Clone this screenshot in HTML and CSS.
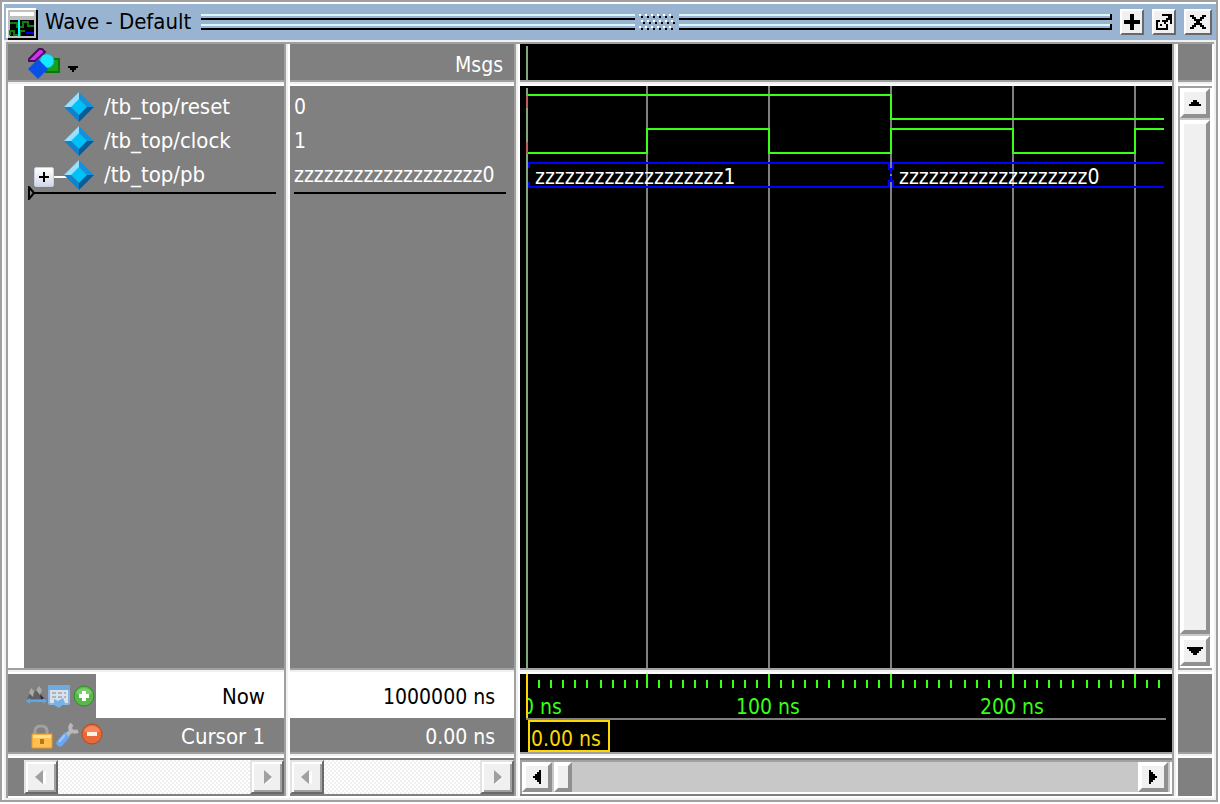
FILE: index.html
```
<!DOCTYPE html>
<html lang="en">
<head>
<meta charset="utf-8">
<title>Wave - Default</title>
<link rel="stylesheet" href="styles.css">
</head>
<body>
<div class="window">
  <header class="titlebar">
    <svg class="app-icon" width="32" height="32" shape-rendering="crispEdges" aria-hidden="true">
      <path fill="#000" d="M2 2h30v30H2z"/><path fill="#fff" d="M0 0h30v30H0z"/><path fill="#c0c0c0" d="M2 2h28v28H2z"/>
      <path fill="#fff" d="M4 4h24v4H4z"/><path fill="#000" d="M4 12h24v16H4z"/>
      <path fill="none" stroke="#147a14" stroke-width="2" d="M4 15h7v4h6v-5h5v4h6M4 27v-4h4v4h6v-4h5"/>
      <path fill="#0ff" d="M12 12h2v16h-2z"/><path fill="#00f" d="M20 24h8v2h-8z"/>
    </svg>
    <h1 class="title">Wave - Default</h1>
    <div class="grip"><i></i><i></i></div>
    <svg class="dots" width="36" height="16" shape-rendering="crispEdges" aria-hidden="true">
      <path stroke="#fff" stroke-width="2" stroke-dasharray="2 4" d="M0 1h34M2 7h34M0 13h34"/>
      <path stroke="#000" stroke-width="2" stroke-dasharray="2 4" d="M2 3h34M4 9h32M2 15h34"/>
    </svg>
    <div class="grip capped"><i></i><i></i></div>
    <div class="window-buttons">
      <button class="tool" aria-label="Zoom"><svg width="16" height="16" shape-rendering="crispEdges"><path d="M6 0h4v6h6v4h-6v6H6v-6H0V6h6z"/></svg></button>
      <button class="tool" aria-label="Undock"><svg width="16" height="16" shape-rendering="crispEdges"><path d="M0 6h4v2H2v6h8v-4h2v6H0zM6 0h10v10h-2V6h-2v2h-2v2H8V8H6V6h4V4h2V2H6zM4 10h2v2H4z"/></svg></button>
      <button class="tool wide" aria-label="Close"><svg width="16" height="14" shape-rendering="crispEdges"><path d="M0 0h4v2h2v2h4V2h2V0h4v2h-2v2h-2v2h-2v2h2v2h2v2h2v2h-4v-2h-2v-2H6v2H4v2H0v-2h2v-2h2V8h2V6H4V4H2V2H0z"/></svg></button>
    </div>
  </header>

  <main class="panes">
    <section class="pane names">
      <div class="pane-head">
        <button class="filter" aria-label="Object filter">
          <svg width="52" height="32" aria-hidden="true">
            <path fill="#18a018" stroke="#087808" stroke-width="2" d="M18 11h13v13H18z"/>
            <path fill="#d030f0" stroke="#481058" stroke-width="2" d="M1 13v-2L11 1h3l3 3-10 9z"/>
            <circle cx="19" cy="13" r="7" fill="#18e8ff" stroke="#3098b0" stroke-dasharray="2 1"/>
            <path fill="#0850e8" d="M10 11l10 10-10 10L0 21z"/>
            <path shape-rendering="crispEdges" d="M40 18h10v2h-2v2h-2v2h-2v-2h-2v-2h-2z"/>
          </svg>
        </button>
      </div>
      <div class="sash"></div>
      <div class="pane-body tree">
        <div class="gutter"></div>
        <ul class="signals">
          <li><svg class="gem" width="30" height="30"><use href="#gem"/></svg>/tb_top/reset</li>
          <li><svg class="gem" width="30" height="30"><use href="#gem"/></svg>/tb_top/clock</li>
          <li class="group"><button class="expand" aria-label="Expand"><svg width="12" height="12" shape-rendering="crispEdges"><path d="M5 1h2v4h4v2H7v4H5V7H1V5h4z"/></svg></button><svg class="gem" width="30" height="30"><use href="#gem"/></svg>/tb_top/pb</li>
          <li class="insert"><svg width="8" height="14"><path fill="#808080" stroke="#000" stroke-width="2" d="M1 1v12l5-6z"/></svg></li>
        </ul>
      </div>
      <div class="sash"></div>
      <div class="foot">
        <div class="foot-now">
          <div class="foot-icons">
            <svg width="70" height="24" aria-hidden="true">
              <path fill="#606060" d="M1 14l4-8 3 2 3-5 7 10v1z"/><path fill="#aaa" d="M3 8l2-5 3 3-1 6zM10 5l3-4 3 4-2 5z"/><path fill="#302048" d="M14 10l5 4h-4z"/>
              <path fill="#58a8f0" d="M0 16l4-3v2h13v-2l4 3-4 3v-2H4v2z"/>
              <rect x="23" y="1" width="20" height="18" rx="1" fill="#d8e0e8" stroke="#8cb4dc" stroke-width="2"/><path fill="#70a8e0" d="M22 0h22v5H22z"/>
              <path stroke="#a8b4c0" stroke-width="2" stroke-dasharray="4 2" d="M26 8h14M26 12h14"/><path fill="#78b0e8" d="M28 14l4 2 5-3 2 5-6 5-5-3z"/>
              <circle cx="58" cy="11" r="10" fill="#58b848" stroke="#308c30"/><path fill="#a0dc90" opacity=".5" d="M50 8a9 9 0 0116 0q-8 5-16 0"/><path fill="#fff" d="M56 6h4v3h3v4h-3v3h-4v-3h-3V9h3z"/>
            </svg>
          </div>
          <span>Now</span>
        </div>
        <div class="foot-cursor">
          <svg width="76" height="26" aria-hidden="true">
            <path fill="none" stroke="#a0a0a0" stroke-width="3" d="M5 13V8q0-5 6-5t6 5v5"/><path fill="#ffc050" stroke="#e89828" d="M2 11h20v14H2z"/><path fill="#ffe090" d="M3 12h18v3H3z"/><path fill="#b87818" d="M10 16h4v5h-4z"/>
            <path stroke="#68a8f0" stroke-width="7" stroke-linecap="round" d="M30 20l6-7"/><path stroke="#98c8ff" stroke-width="2" d="M29 19l6-7"/><path fill="none" stroke="#b8b8b8" stroke-width="4" d="M37 12l4-4M42 1q-3 3-1 6t7 1"/>
            <circle cx="62" cy="11" r="10" fill="#e86838" stroke="#b84820"/><path fill="#ffa880" opacity=".5" d="M54 8a9 9 0 0116 0q-8 5-16 0"/><path fill="#fff0e0" d="M57 9h10v4H57z"/>
          </svg>
          <span>Cursor 1</span>
        </div>
      </div>
      <div class="sash"></div>
      <div class="scroll-row indent">
        <button class="arrow flat" aria-label="Left" disabled><svg width="12" height="16"><use href="#left-off"/></svg></button>
        <div class="trough"></div>
        <button class="arrow flat" aria-label="Right" disabled><svg width="12" height="16"><use href="#right-off"/></svg></button>
      </div>
    </section>
    <div class="vsash"></div>

    <section class="pane values">
      <div class="pane-head msgs">Msgs</div>
      <div class="sash"></div>
      <div class="pane-body">
        <ul class="signals vals"><li>0</li><li>1</li><li>zzzzzzzzzzzzzzzzzzz0</li><li class="insert"></li></ul>
      </div>
      <div class="sash"></div>
      <div class="foot">
        <div class="foot-now"><span>1000000 ns</span></div>
        <div class="foot-cursor"><span>0.00 ns</span></div>
      </div>
      <div class="sash"></div>
      <div class="scroll-row">
        <button class="arrow flat" aria-label="Left" disabled><svg width="12" height="16"><use href="#left-off"/></svg></button>
        <div class="trough"></div>
        <button class="arrow flat" aria-label="Right" disabled><svg width="12" height="16"><use href="#right-off"/></svg></button>
      </div>
    </section>
    <div class="vsash"></div>

    <section class="pane waves">
      <div class="pane-head black"><svg class="plot" shape-rendering="crispEdges"><path class="zero" d="M7 2v40"/></svg></div>
      <div class="sash"></div>
      <div class="pane-body black">
        <svg class="plot" shape-rendering="crispEdges">
          <path class="grid" d="M127 0v2000M249 0v2000M371 0v2000M493 0v2000M615 0v2000"/>
          <path class="zero" d="M7 2v2000"/>
          <path class="unknown" d="M7 10v12M7 56v12"/>
          <path class="signal" d="M8 9h363v24h273"/>
          <path class="signal" d="M8 67h119v-24h122v24h122v-24h122v24h122v-24h29"/>
          <path class="bus" d="M9 82v-5h360v6h2v5M9 96v5h360v-6h2v-5M644 77h-271v6h-2v5M644 101h-271v-6h-2v-5"/>
          <text x="15" y="98">zzzzzzzzzzzzzzzzzzz1</text>
          <text x="379" y="98">zzzzzzzzzzzzzzzzzzz0</text>
        </svg>
      </div>
      <div class="sash"></div>
      <div class="foot black">
        <svg class="plot" shape-rendering="crispEdges">
          <path class="signal" d="M19 6v8m12-8v8m12-8v8m12-8v8m12-8v8m14-8v8m12-8v8m12-8v8m12-8v8M127 0v14M139 6v8m12-8v8m12-8v8m12-8v8m12-8v8m14-8v8m12-8v8m12-8v8m12-8v8M249 0v14M261 6v8m12-8v8m12-8v8m12-8v8m12-8v8m14-8v8m12-8v8m12-8v8m12-8v8M371 0v14M383 6v8m12-8v8m12-8v8m12-8v8m12-8v8m14-8v8m12-8v8m12-8v8m12-8v8M493 0v14M505 6v8m12-8v8m12-8v8m12-8v8m12-8v8m14-8v8m12-8v8m12-8v8m12-8v8M615 0v14M627 6v8m12-8v8"/>
          <svg x="6" width="640" height="44"><text class="tick" x="-4" y="40">0 ns</text></svg>
          <text class="tick mid" x="248" y="40">100 ns</text>
          <text class="tick mid" x="492" y="40">200 ns</text>
          <path class="grid" d="M6 45h640"/>
          <path class="cursor" d="M7 0v44M9 47h80v30H9z"/>
          <text class="cursor-time" x="11" y="72">0.00 ns</text>
        </svg>
      </div>
      <div class="sash"></div>
      <div class="scroll-row live">
        <button class="arrow raised" aria-label="Scroll left"><svg width="8" height="14" shape-rendering="crispEdges"><path d="M8 0v14H6v-2H4v-2H2V8H0V6h2V4h2V2h2V0z"/></svg></button>
        <div class="thumb"></div>
        <div class="fill"></div>
        <button class="arrow raised" aria-label="Scroll right"><svg width="8" height="14" shape-rendering="crispEdges"><path d="M0 0v14h2v-2h2v-2h2V8h2V6H6V4H4V2H2V0z"/></svg></button>
      </div>
    </section>
    <div class="vsash"></div>

    <section class="pane side">
      <div class="pane-head"></div>
      <div class="sash"></div>
      <div class="pane-body vscroll">
        <button class="arrow raised" aria-label="Scroll up"><svg width="12" height="6" shape-rendering="crispEdges"><path d="M4 0h4v2h2v2h2v2H0V4h2V2h2z"/></svg></button>
        <div class="thumb tall"></div>
        <button class="arrow raised" aria-label="Scroll down"><svg width="16" height="8" shape-rendering="crispEdges"><path d="M0 0h16v2h-2v2h-2v2h-2v2H6V6H4V4H2V2H0z"/></svg></button>
      </div>
      <div class="sash"></div>
      <div class="foot"></div>
      <div class="sash"></div>
      <div class="corner"></div>
    </section>
  </main>
</div>

<svg class="defs" width="0" height="0" aria-hidden="true">
  <defs>
    <g id="gem">
      <path fill="#98e0ff" d="M15 0v8l-7 7H0z"/><path fill="#1890d8" d="M15 0l15 15h-8l-7-7z"/>
      <path fill="#1480c8" d="M0 15h8l7 7v8z"/><path fill="#045c98" d="M30 15h-8l-7 7v8z"/><path fill="#00c0f8" d="M15 7l8 8-8 8-8-8z"/>
    </g>
    <g id="left-off"><path fill="#fff" d="M11 2v14L3 9z"/><path fill="#a0a0a0" d="M8 1v14L0 8z"/></g>
    <g id="right-off"><path fill="#fff" d="M4 3l8 5-8 8z"/><path fill="#a0a0a0" d="M3 1v14l8-7z"/></g>
  </defs>
</svg>
</body>
</html>
```

FILE: styles.css
```
* { box-sizing: border-box; }

body {
  margin: 0;
  height: 100vh;
  padding: 0 2px 2px 0;
  background: #fff;
  color: #fff;
  font: 21px/34px "DejaVu Sans Condensed", "Noto Sans", sans-serif;
}

svg { display: block; flex: none; }
.defs { position: absolute; }
button { margin: 0; padding: 0; border: 0; background: none; font: inherit; }

.window {
  height: 100%;
  display: flex;
  flex-direction: column;
  border: 2px solid #a0a0a0;
  box-shadow: inset 2px 2px 0 #fff;
  padding: 2px 0 0 2px;
}

/* title bar */
.titlebar {
  display: flex;
  align-items: center;
  height: 36px;
  padding: 0 4px 0 2px;
  background: #99b4d1;
}
.app-icon { align-self: flex-end; }
.title {
  margin: 0 10px 0 7px;
  color: #000;
  font-size: 22px;
  font-weight: normal;
  line-height: 36px;
  white-space: nowrap;
}
.grip { flex: 1; display: grid; gap: 4px; }
.grip i { height: 6px; background: linear-gradient(#d8f8ff 2px, transparent 2px 4px, #000 4px); }
.grip.capped i { border-right: 2px solid #000; }
.dots { margin: 0 4px; }
.window-buttons { display: flex; gap: 8px; margin-left: 8px; }
.tool {
  display: grid;
  place-items: center;
  width: 24px;
  height: 26px;
  background: #f0f0f0;
  border: 2px solid;
  border-color: #fff #696969 #696969 #fff;
}
.tool.wide { width: 28px; }

/* panes and the sashes between them */
.panes {
  flex: 1;
  min-height: 0;
  display: flex;
  border: 2px solid #f0f0f0;
  box-shadow: inset 2px 2px 0 #a0a0a0, inset -2px -2px 0 #fff;
  padding: 2px;
}
.pane { display: flex; flex-direction: column; background: #808080; min-width: 0; }
.names { flex: 0 0 276px; }
.values { flex: 0 0 224px; }
.waves { flex: 1; }
.side { flex: 0 0 34px; }
.sash { flex: none; height: 6px; border-top: 2px solid #a0a0a0; border-bottom: 2px solid #fff; background: #f0f0f0; }
.vsash { flex: none; width: 6px; border-left: 2px solid #a0a0a0; border-right: 2px solid #fff; background: #f0f0f0; }
.pane-head { flex: none; height: 36px; }
.pane-body { flex: 1; min-height: 0; }
.black { background: #000; }
.filter { margin: 4px 0 0 20px; display: block; }
.msgs { padding-right: 11px; line-height: 42px; text-align: right; }

.tree { display: flex; }
.gutter { width: 16px; background: #fff; }
.signals { flex: 1; margin: 0; padding: 4px 8px 0 4px; list-style: none; }
.signals li { display: flex; align-items: center; height: 34px; white-space: nowrap; }
.names { font-size: 22px; }
.gem { margin: 0 10px 0 36px; }
.group { background: linear-gradient(#fff, #fff) 26px 18px / 14px 2px no-repeat; }
.group .gem { margin-left: 10px; }
.expand {
  display: grid;
  place-items: center;
  width: 20px;
  height: 20px;
  margin: 4px 0 0 6px;
  border: 1px solid #c8d0e0;
  border-radius: 2px;
  background: linear-gradient(#fff, #d0d8e8);
}
.signals .insert { height: 2px; background: #000; }
.tree .insert { margin-left: 4px; }
.insert svg { margin-left: -4px; }

.foot { flex: none; height: 78px; }
.foot-now, .foot-cursor { display: flex; align-items: center; }
.foot-now { height: 44px; background: #fff; color: #000; }
.foot-cursor { height: 34px; padding: 2px 0 0 22px; }
.foot span { margin-left: auto; padding: 2px 19px 0 0; white-space: nowrap; }
.foot-icons { width: 88px; height: 44px; padding: 11px 0 0 18px; background: #808080; }

/* waveforms */
.plot { width: 100%; height: 100%; }
.plot path { fill: none; stroke-width: 2px; }
.plot text { fill: #fff; }
.plot .grid { stroke: #808080; }
.plot .zero { stroke: #80a880; }
.plot .unknown { stroke: #b86058; }
.plot .signal { stroke: #38ff14; }
.plot .bus { stroke: #00f; }
.plot .cursor { stroke: #ffd700; }
.plot .tick { fill: #38ff14; }
.plot .mid { text-anchor: middle; }
.plot .cursor-time { fill: #ffd700; }

/* scroll bars */
.scroll-row {
  flex: none;
  display: flex;
  height: 38px;
  border-top: 2px solid #808080;
  border-bottom: 2px solid #808080;
}
.corner { height: 38px; }
.indent { padding-left: 16px; }
.arrow { flex: none; display: grid; place-items: center; background: #f0f0f0; }
.flat {
  width: 34px;
  height: 34px;
  border: 2px solid;
  border-color: #e3e3e3 #696969 #696969 #e3e3e3;
  box-shadow: inset 2px 2px 0 #fff, inset -2px -2px 0 #a0a0a0;
}
.trough { flex: 1; background: repeating-conic-gradient(#fff 0 25%, #f0f0f0 0 50%) 0 0 / 4px 4px; }
.live {
  background: #c8c8c8;
  box-shadow: inset 2px 2px 0 #a0a0a0, inset -2px -2px 0 #fff;
  padding: 2px 4px 2px 2px;
}
.raised { width: 30px; height: 30px; }
.raised, .thumb {
  background: #f0f0f0;
  border: 4px solid;
  border-color: #fff #909090 #909090 #fff;
}
.thumb { width: 18px; height: 30px; margin-left: 2px; }
.fill { flex: 1; }
.vscroll {
  display: flex;
  flex-direction: column;
  padding: 2px;
  gap: 2px;
  background: #c8c8c8;
  box-shadow: inset 2px 2px 0 #a0a0a0, inset -2px -2px 0 #fff;
}
.thumb.tall { flex: 1; width: 30px; margin-left: 0; }
```
